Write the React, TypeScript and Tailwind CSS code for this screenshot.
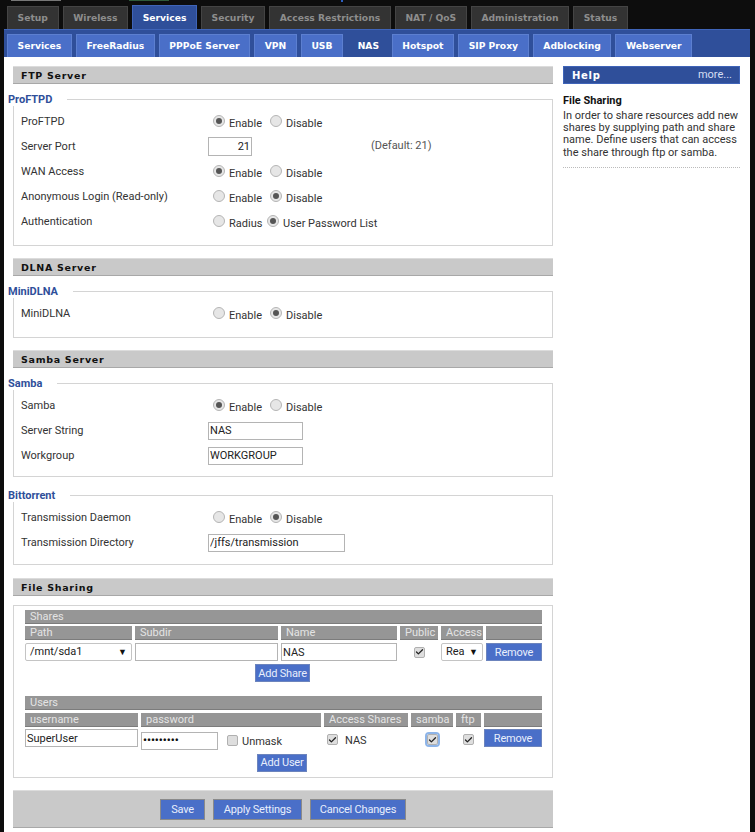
import { Check } from 'lucide-react';

const mainTabs = ['Setup', 'Wireless', 'Services', 'Security', 'Access Restrictions', 'NAT / QoS', 'Administration', 'Status'];
const subTabs = ['Services', 'FreeRadius', 'PPPoE Server', 'VPN', 'USB', 'NAS', 'Hotspot', 'SIP Proxy', 'Adblocking', 'Webserver'];

const Radio = ({ on = false }: { on?: boolean }) => (
  <span className="flex items-center justify-center w-[12px] h-[12px] mb-[2px] rounded-full border border-[#b5b5b5] bg-[#e6e6e6] shrink-0">
    {on && <span className="w-[6px] h-[6px] rounded-full bg-[#555]" />}
  </span>
);

const Check2 = ({ on = true, focus = false }: { on?: boolean; focus?: boolean }) => (
  <span
    className={`flex items-center justify-center w-[11px] h-[11px] rounded-[2px] border border-[#b0b0b0] bg-[#dedede] shrink-0 ${
      focus ? 'outline-2 outline-[#8db4e8]' : ''
    }`}
  >
    {on && <Check size={10} strokeWidth={3.5} className="text-[#222]" />}
  </span>
);

const Choice = ({ a, b, first, gap = 'w-[45px]' }: { a: string; b: string; first: boolean; gap?: string }) => (
  <div className="flex items-center pl-[5px]">
    <Radio on={first} />
    <span className={`pl-[4px] pt-[6px] ${gap}`}>{a}</span>
    <Radio on={!first} />
    <span className="pl-[4px] pt-[6px]">{b}</span>
  </div>
);

const Row = ({ label, children }: { label: string; children: React.ReactNode }) => (
  <div className="flex items-center h-[25px]">
    <div className="w-[187px] pt-[1px]">{label}</div>
    {children}
  </div>
);

const Title = ({ children }: { children: React.ReactNode }) => (
  <h2 className="h-[18px] bg-[#c9c9c9] border-t border-[#dcdcdc] border-b border-b-[#a8a8a8] pl-[8px] text-[9.5px] leading-[17px] font-bold tracking-[.7px] text-[#111] font-['DejaVu_Sans',sans-serif]">
    {children}
  </h2>
);

const Group = ({ legend, children, className = '' }: { legend: string; children: React.ReactNode; className?: string }) => (
  <fieldset className={`border border-[#d4d4d4] pl-[7px] ${className}`}>
    <legend className="-ml-[13px] pr-[15px] h-[14px] leading-[16px] font-bold text-[11px] text-[#2f4f9a]">{legend}</legend>
    {children}
  </fieldset>
);

const Head = ({ children }: { children?: React.ReactNode }) => (
  <div className="h-[14px] bg-[#969696] border-b border-[#7c7c7c] pl-[5px] leading-[13px] text-[#e4e4e4]">{children}</div>
);

const Field = ({ value, className = '' }: { value: string; className?: string }) => (
  <input
    readOnly
    value={value}
    className={`h-[18px] border border-[#b4b4b4] bg-white px-[1px] text-[11px] text-[#222] outline-none ${className}`}
  />
);

const Btn = ({ children, className = '' }: { children: React.ReactNode; className?: string }) => (
  <button className={`h-[18px] bg-[#4a6fc8] border border-[#6c84bd] text-[11px] tracking-[-0.2px] text-[#e8eefc] leading-none ${className}`}>{children}</button>
);

const Caret = () => <span className="text-[9px] leading-none text-[#111]">▼</span>;

export default function App() {
  return (
    <div className="w-[755px] h-[832px] overflow-hidden bg-[#0d0d0d] text-[11px] text-[#333] font-['Roboto','Open_Sans',sans-serif]">
      <div className="h-[6px] flex pl-[7px]">
        <svg width="350" height="2" className="block">
          <rect x="4" width="50" height="1" fill="#777" />
          <rect x="122" width="40" height="1" fill="#2f5a3a" />
          <rect x="334" width="2" height="2" fill="#2d5fc0" />
        </svg>
      </div>
      <nav className="h-[23px] flex items-end gap-[4px] pl-[7px] font-['DejaVu_Sans',sans-serif] font-bold text-[9.2px]">
        {mainTabs.map((t) =>
          t === 'Services' ? (
            <div key={t} className="h-[24px] px-[9.6px] flex items-center bg-[#2f4f9a] border border-b-0 border-[#3f64b8] text-white">
              {t}
            </div>
          ) : (
            <div key={t} className="h-[23px] px-[9.6px] flex items-center bg-[#333] border border-b-0 border-[#444] text-[#8d8d8d]">
              {t}
            </div>
          ),
        )}
      </nav>
      <div className="mx-[4px] w-[746px] h-[803px] bg-white">
        <div className="h-[28px] bg-[#2f4f9a] border-t border-[#3f64b8] flex items-end gap-[4px] pl-[3px] font-['DejaVu_Sans',sans-serif] font-bold text-[9.2px] text-white">
          {subTabs.map((t) => (
            <div
              key={t}
              className={`h-[23px] px-[9.6px] flex items-center border border-b-0 ${
                t === 'NAS' ? 'bg-[#2f4f9a] border-[#2f4f9a] -mr-[2px]' : 'bg-[#4a6fc8] border-[#5c7fd0]'
              }`}
            >
              {t}
            </div>
          ))}
        </div>
        <div className="flex pt-[9px] pl-[9px]">
          <main className="w-[540px] shrink-0">
            <Title>FTP Server</Title>
            <Group legend="ProFTPD" className="mt-[8px] pt-[3px] h-[154px]">
              <Row label="ProFTPD"><Choice a="Enable" b="Disable" first /></Row>
              <Row label="Server Port">
                <Field value="21" className="w-[44px] h-[19px] text-right pr-[1px]" />
                <span className="ml-[119px] text-[#555]">(Default: 21)</span>
              </Row>
              <Row label="WAN Access"><Choice a="Enable" b="Disable" first /></Row>
              <Row label="Anonymous Login (Read-only)"><Choice a="Enable" b="Disable" first={false} /></Row>
              <Row label="Authentication">
                <Choice a="Radius" b="User Password List" first={false} gap="w-[42px]" />
              </Row>
            </Group>

            <div className="mt-[12px]"><Title>DLNA Server</Title></div>
            <Group legend="MiniDLNA" className="mt-[8px] pt-[3px] h-[54px]">
              <Row label="MiniDLNA"><Choice a="Enable" b="Disable" first={false} /></Row>
            </Group>

            <div className="mt-[12px]"><Title>Samba Server</Title></div>
            <Group legend="Samba" className="mt-[8px] pt-[3px] h-[101px]">
              <Row label="Samba"><Choice a="Enable" b="Disable" first /></Row>
              <Row label="Server String"><Field value="NAS" className="w-[95px]" /></Row>
              <Row label="Workgroup"><Field value="WORKGROUP" className="w-[95px]" /></Row>
            </Group>
            <Group legend="Bittorrent" className="mt-[11px] pt-[3px] h-[77px]">
              <Row label="Transmission Daemon"><Choice a="Enable" b="Disable" first={false} /></Row>
              <Row label="Transmission Directory"><Field value="/jffs/transmission" className="w-[137px]" /></Row>
            </Group>

            <div className="mt-[13px]"><Title>File Sharing</Title></div>
            <section className="mt-[9px] h-[173px] border border-[#d4d4d4] pt-[4px] pl-[11px] pr-[10px]">
              <Head>Shares</Head>
              <div className="mt-[2px] grid grid-cols-[107px_143px_116px_38px_42px_1fr] gap-x-[3px] gap-y-[3px]">
                <Head>Path</Head>
                <Head>Subdir</Head>
                <Head>Name</Head>
                <Head>Public</Head>
                <Head>Access</Head>
                <Head />
                <div className="h-[18px] flex items-center justify-between px-[4px] border border-[#c4c4c4] rounded-[2px] bg-white text-[#222]">
                  /mnt/sda1 <Caret />
                </div>
                <Field value="" className="w-full" />
                <Field value="NAS" className="w-full" />
                <div className="flex items-center justify-center"><Check2 /></div>
                <div className="h-[18px] flex items-center justify-between px-[4px] border border-[#c4c4c4] rounded-[2px] bg-white text-[#222]">
                  Rea <Caret />
                </div>
                <Btn>Remove</Btn>
              </div>
              <div className="mt-[3px] pl-[230px]"><Btn className="w-[55px]">Add Share</Btn></div>

              <div className="mt-[14px]"><Head>Users</Head></div>
              <div className="mt-[3px] grid grid-cols-[113px_180px_84px_42px_25px_1fr] gap-x-[3px] gap-y-[2px]">
                <Head>username</Head>
                <Head>password</Head>
                <Head>Access Shares</Head>
                <Head>samba</Head>
                <Head>ftp</Head>
                <Head />
                <Field value="SuperUser" className="w-full" />
                <div className="flex items-center pt-[2px]">
                  <input
                    readOnly
                    type="password"
                    value="123456789"
                    className="w-[77px] h-[18px] border border-[#b4b4b4] px-[1px] text-[11px] font-bold text-[#111] outline-none"
                  />
                  <span className="ml-[9px]"><Check2 on={false} /></span>
                  <span className="ml-[4px] pt-[3px]">Unmask</span>
                </div>
                <div className="flex items-center pl-[3px]">
                  <Check2 />
                  <span className="ml-[7px] pt-[3px]">NAS</span>
                </div>
                <div className="flex items-center justify-center"><Check2 focus /></div>
                <div className="flex items-center justify-center"><Check2 /></div>
                <Btn>Remove</Btn>
              </div>
              <div className="mt-[3px] pl-[232px]"><Btn className="w-[50px]">Add User</Btn></div>
            </section>

            <div className="mt-[12px] h-[38px] bg-[#c9c9c9] border-t border-[#dcdcdc] border-b border-b-[#a8a8a8] flex items-center gap-[8px] pl-[147px]">
              <Btn className="w-[45px] h-[21px] border-[#8a8a8a]">Save</Btn>
              <Btn className="w-[89px] h-[21px] border-[#8a8a8a]">Apply Settings</Btn>
              <Btn className="w-[96px] h-[21px] border-[#8a8a8a]">Cancel Changes</Btn>
            </div>
          </main>

          <aside className="ml-[10px] w-[177px]">
            <div className="h-[18px] flex items-center justify-between bg-[#2f4f9a] border border-[#3f64b8] pl-[8px] pr-[7px] text-white">
              <span className="font-['DejaVu_Sans',sans-serif] font-bold tracking-[.7px] text-[10px]">Help</span>
              <span className="text-[#d5def2]">more...</span>
            </div>
            <h3 className="mt-[10px] font-bold text-[#111] leading-[14px]">File Sharing</h3>
            <p className="mt-[2px] pb-[8px] leading-[12.2px] text-[#333] border-b border-dotted border-[#bbb]">
              In order to share resources add new shares by supplying path and share name. Define users that can access the share through ftp or samba.
            </p>
          </aside>
        </div>
      </div>
    </div>
  );
}
